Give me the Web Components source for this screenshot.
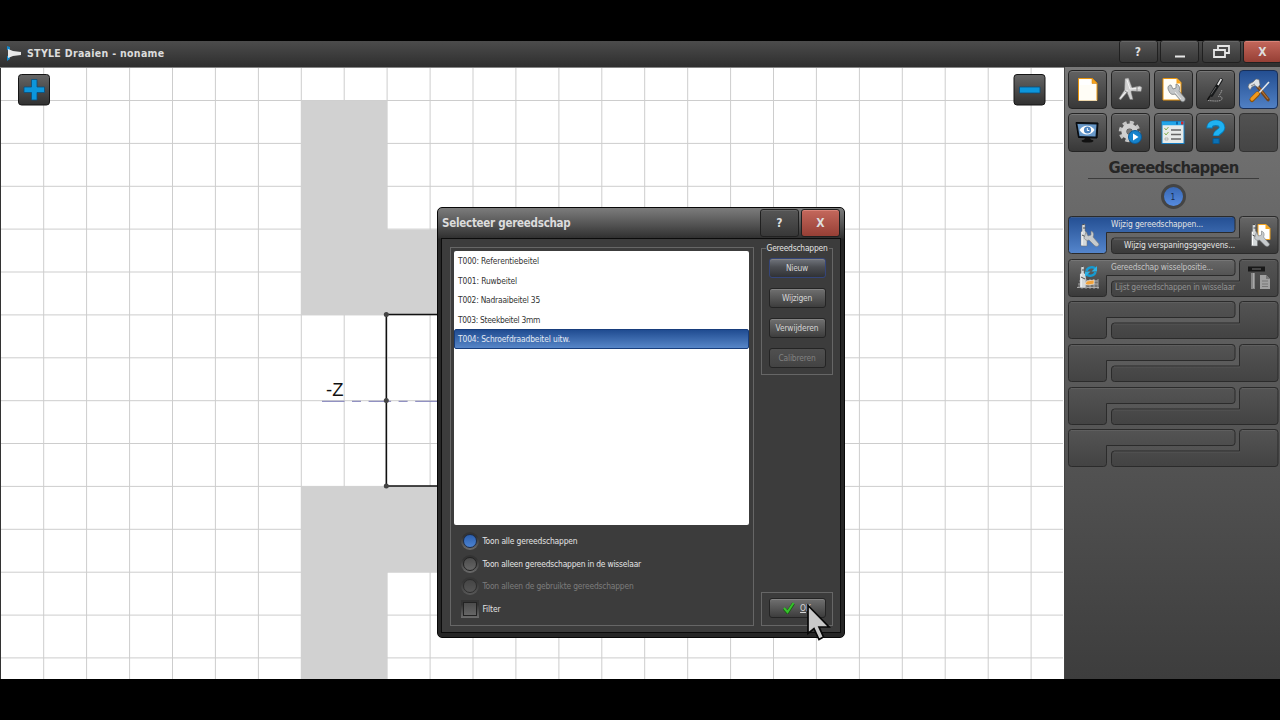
<!DOCTYPE html>
<html lang="nl">
<head>
<meta charset="utf-8">
<title>STYLE Draaien - noname</title>
<style>
    html, body {
        margin: 0;
        height: 100%;
        background: #000;
        overflow: hidden;
    }

    body {
        --ui-font: "DejaVu Sans Condensed", "DejaVu Sans", "Noto Sans", sans-serif;
        font-family: var(--ui-font);
        font-stretch: condensed;
        font-size: 8.4px;
        color: #e4e4e4;
    }
</style>
</head>
<body>
<style-app></style-app>

<script>
// Icons of the tool palette, all on a 39x39 grid
const WRENCH = '<path d="M16 18c-2-3-1-6 2-6l2 4 3-1 0-4c4 1 4 5 3 7l6 7c1 3-2 5-4 3l-6-7c-3 1-5 0-6-3z" fill="#c3c6c8" stroke="#6f7375" stroke-width=".7"/><path d="M22 19l6 7" stroke="#eee"/>';
const TURNTOOL = '<path d="M13 30V16l1-1V9l3-1v7l2 2v13z" fill="#d5d9da" stroke="#6c6f70" stroke-width=".5"/><path d="M14 16v13" stroke="#fff"/><path d="M14.500 8.500h2M15 12h2.500M14 19l4 2" stroke="#4d4f50" fill="none"/>';
const TOOLWRENCH = '<path d="M18 16l2 4 3-1 0-4c3 1 3 4 2 6l6 7c0 2-2 3-4 2l-6-6c-2 1-4 0-5-2z" fill="#c7cbcd" stroke="#777b7d" stroke-width=".6"/>';

const ICONS = {
    doc: '<path d="M10.500 8.500h14l4.500 4.500v17.500h-18.500z" fill="#fffdf6" stroke="#e8940c"/><path d="M24 8v5.500h5z" fill="#f7a51d" stroke="#c87906" stroke-width=".5"/><path d="M11 30.500h18" stroke="#efd9ad"/><path d="M12 10h10v5h-10z" fill="#fff"/>',
    chuck: '<path d="M14 8.500l3.500-.5 3.500 9.500 8-1.500 2 1.500-1 4-9-.5-1 .5 2 8h-3l-3-7-6.500 7.500-1.500-1.500 5.500-8.500z" fill="#d0d0d0" stroke="#777" stroke-width=".5"/><path d="M16 10l3 9 10-1M9.500 28l7-8" stroke="#f2f2f2" fill="none"/><path d="M26 17v4M14 21l3 2" stroke="#888" fill="none"/>',
    docWrench: '<path d="M9 8.500h14l4 4v17.500h-18z" fill="#fffdf6" stroke="#e8940c"/><path d="M22.500 8v5.500h5z" fill="#f7a51d"/><g transform="translate(-1 3)">' + WRENCH + '</g>',
    pen: '<path d="M25 10L15.500 25" stroke="#17191a" stroke-width="3.600" stroke-linecap="round"/><path d="M25.300 9l-3.500 6" stroke="#e0e0e0" stroke-width="1.700"/><path d="M20 17l-5 7.500" stroke="#777" stroke-width=".8"/><path d="M14 26l-2.500 4" stroke="#111" stroke-width="1.500"/><path d="M12 30.500c6 .5 14 1.500 14-2s-5-.5-3-3 2.500-4 3-6" stroke="#a6a6a6" fill="none" stroke-width=".9" stroke-dasharray="1.500 .6"/>',
    tools: '<path d="M19 17l10 12.500" stroke="#70441c" stroke-width="3.600" stroke-linecap="round"/><path d="M19 16.500l10 12.500" stroke="#b97537" stroke-width="1.200"/><path d="M9 17l1-3 4-2 3-3 3 .5 1 5-2 3-3-2-3 1.500-2 3z" fill="#dfe3e5" stroke="#666" stroke-width=".6"/><path d="M12 16l4-2" stroke="#888"/><path d="M30 12L20 23" stroke="#e4e7ea" stroke-width="1.600"/><path d="M18.500 24l-5.500 5.500" stroke="#8b5208" stroke-width="5" stroke-linecap="round"/><path d="M18.500 23.500l-5.500 5.500" stroke="#f2991b" stroke-width="3.400" stroke-linecap="round"/>',
    monitor: '<path d="M8 9.500l22 .5-1 15-18.500-.5z" fill="#10161d" stroke="#05080c"/><path d="M9.500 11l19 .5-1 12-16-.5z" fill="#6798c9"/><path d="M11.500 17c4-6 12-5 15 0-4 6-11 6-15 0z" fill="#fff"/><circle cx="19.500" cy="17" r="3.600" fill="#4b82bd"/><path d="M19.300 15v2.500h2" stroke="#fff" fill="none"/><path d="M17 25h5l1 2-7 0z" fill="#111"/><ellipse cx="19.500" cy="28" rx="6" ry="1.600" fill="#111"/>',
    gear: '<circle cx="18.500" cy="18.500" r="8.500" fill="none" stroke="#c4c4c4" stroke-width="4.500" stroke-dasharray="3.800 2.870"/><circle cx="18.500" cy="18.500" r="5.600" fill="none" stroke="#d0d0d0" stroke-width="5"/><circle cx="18.500" cy="18.500" r="2.600" fill="#777"/><circle cx="24" cy="24" r="6.500" fill="#1683cc" stroke="#0a5b98"/><path d="M22 20.500l5.500 3.500-5.500 3.500z" fill="#fff"/>',
    form: '<rect x="8" y="8.500" width="22" height="22" fill="#e7eae9" stroke="#1980c4"/><path d="M8 10.500h22" stroke="#22a5e8" stroke-width="3.500"/><path d="M27 8.500h2.500v3H27z" fill="#d2262b"/><path d="M22 8.500h2v3h-2z" fill="#0c66ab"/><path d="M10.500 15l1.500 2 2.500-3M10.500 20l1.500 2 2.500-3" stroke="#86ad53" fill="none"/><path d="M17 17h10M17 21.500h10M17 26h10" stroke="#666" stroke-width="1.600"/><path d="M11 25h3v2h-3z" fill="none" stroke="#999" stroke-width=".6"/>',
    help: '<path d="M13.500 15.500c0-7 12.500-7 12.500-1 0 4.500-6 4-6 8.500" fill="none" stroke="#0878b5" stroke-width="6.500"/><path d="M13.500 14.500c0-6.500 12.500-6.500 12.500 0 0 4-6 4-6 8" fill="none" stroke="#1fb2f2" stroke-width="4.800"/><path d="M17 25.500h6.200v5H17z" fill="#0b70b4" stroke="#07588f"/>',
    toolWrench: TURNTOOL + TOOLWRENCH,
    toolDoc: '<path d="M18 8.500h8l4 4v11H18z" fill="#fff" stroke="#f0a323"/><path d="M25.500 8v5h5z" fill="#f6a71f"/><g transform="translate(-1.500 0)">' + TURNTOOL + TOOLWRENCH + '</g>',
    toolSwap: '<path d="M9 29l4-8h16l1 8z" fill="#737373"/><path d="M11 22h19M10 25h20M9 28.500h22M14 20v10M18 20v10M22 20v10M26 20v10M30 20v10" stroke="#b9b9b9" stroke-width=".8"/><g transform="translate(-1 -1)">' + TURNTOOL + '</g><path d="M18.500 12c1-4 7-5 9-2M27.500 13c-1 4-7 5-9 2" stroke="#159ad1" stroke-width="2.400" fill="none"/><path d="M29 7v5.500h-5.500zM17 18v-5.500h5.500z" fill="#2eb1e5"/><path d="M17 25l2-3 7-1v4l-6 1z" fill="#f0a139" stroke="#fff" stroke-width=".5"/>',
    toolList: '<path d="M8 7.500h17v5H8z" fill="#181818"/><path d="M12 10h9" stroke="#444" stroke-width="2"/><path d="M11 14h4v16h-4z" fill="#878787"/><path d="M13.500 14v15" stroke="#a9a9a9"/><path d="M20 16h6l4 4v10H20z" fill="#a0a0a0"/><path d="M22 22h6M22 25h6M22 27.500h6" stroke="#777"/><path d="M26 16v4h4z" fill="#777"/>'
};

const icon = (name) => `<svg class="icon" width="39" height="39" viewBox="0 0 39 39">${ICONS[name] || ''}</svg>`;

/**
 * One line of text, tracked so that it fills the given width
 */
class FitText extends HTMLElement {
    constructor() {
        super();
        this.attachShadow({ mode: 'open' });
    }

    connectedCallback() {
        this.shadowRoot.innerHTML = `
            <style>
                :host { display: inline-block; white-space: pre; line-height: 1.2; text-align: left; }
            </style>
            <span><slot></slot></span>
        `.replace(/>\s+</g, '><').trim();

        const span = this.shadowRoot.querySelector('span');
        const width = parseFloat(this.getAttribute('width'));
        const natural = span.getBoundingClientRect().width;
        span.style.letterSpacing = (width - natural) / this.textContent.length + 'px';
        this.style.width = width + 'px';
    }
}

/**
 * Caption buttons of a window: help, minimise, restore, close
 */
class CaptionButton extends HTMLElement {
    constructor() {
        super();
        this.attachShadow({ mode: 'open' });
    }

    connectedCallback() {
        this.shadowRoot.innerHTML = `
            <style>
                :host {
                    display: flex;
                    align-items: center;
                    justify-content: center;
                    box-sizing: border-box;
                    width: 39px;
                    border: 1px solid #202020;
                    border-radius: 3px;
                    background: linear-gradient(#565656, #383838);
                    box-shadow: inset 0 1px #666;
                    color: #dedede;
                    font-weight: bold;
                    font-size: 12px;
                }

                :host([close]) {
                    background: linear-gradient(#c4685c, #963f35);
                    box-shadow: inset 0 1px #d98378;
                }
            </style>
            <slot></slot>
        `;
    }
}

class ToolButton extends HTMLElement {
    constructor() {
        super();
        this.attachShadow({ mode: 'open' });
    }

    connectedCallback() {
        this.shadowRoot.innerHTML = `
            <style>
                :host {
                    display: block;
                    box-sizing: border-box;
                    width: 39px;
                    height: 39px;
                    border: 1px solid #252525;
                    border-radius: 4px;
                    background: linear-gradient(#626262, #383838);
                    box-shadow: inset 0 1px #777;
                }

                :host([active]) {
                    background: linear-gradient(#234e91, #5080c4);
                    border-color: #182f58;
                    box-shadow: none;
                }

                :host([blank]) {
                    background: linear-gradient(#525252, #454545);
                    border-color: #333;
                    box-shadow: none;
                }

                .icon { display: block; margin: -1px; }
            </style>
            ${icon(this.getAttribute('icon'))}
        `;
    }
}

/**
 * Two interlocking L-shaped buttons, one row of the side menu
 */
class MenuPair extends HTMLElement {
    constructor() {
        super();
        this.attachShadow({ mode: 'open' });
    }

    fill(state) {
        return { active: 'url(#blue)', on: 'url(#raised)' }[state] || 'url(#flat)';
    }

    connectedCallback() {
        const left = this.getAttribute('left');
        const right = this.getAttribute('right');
        this.shadowRoot.innerHTML = `
            <style>
                :host { display: grid; width: 211px; height: 38.700px; }
                .shape, .content { grid-area: 1 / 1; }
                .shape path { stroke: #2b2b2b; }
                .shape .lit { fill: none; stroke: #808080; opacity: .25; }
                .shape .lit.strong { opacity: .6; }
                .content { display: grid; grid-template-columns: 39px 1fr 39px; height: 38px; }
                .icon { display: block; }
                .labels { display: flex; flex-direction: column; min-width: 0; }
                .top { height: 16px; padding: 3px 0 0 4px; }
                .bottom { height: 16px; padding-top: 4.500px; text-align: right; margin-right: 5px; }
            </style>
            <svg class="shape" width="211" height="38" viewBox="0 0 211 38">
                <defs>
                    <linearGradient id="blue" x2="0" y2="1"><stop stop-color="#234e92"/><stop offset="1" stop-color="#5586cd"/></linearGradient>
                    <linearGradient id="raised" x2="0" y2="1"><stop stop-color="#686868"/><stop offset="1" stop-color="#393939"/></linearGradient>
                    <linearGradient id="flat" x2="0" y2="1"><stop stop-color="#545454"/><stop offset="1" stop-color="#434343"/></linearGradient>
                </defs>
                <path fill="${this.fill(left)}" d="M3.500.5H164q3 0 3 3V13.500q0 3-3 3H38.500V34.500q0 3-3 3H3.500q-3 0-3-3V3.500q0-3 3-3Z"/>
                <path fill="${this.fill(right)}" d="M174.500.5H207q3 0 3 3V34.500q0 3-3 3H46.500q-3 0-3-3V25q0-3 3-3H171.500V3.500q0-3 3-3Z"/>
                <path class="lit ${left === 'on' ? 'strong' : ''}" d="M3 1.500H164"/>
                <path class="lit ${right === 'on' ? 'strong' : ''}" d="M174 1.500H207M46 23H172"/>
            </svg>
            <div class="content">
                ${icon(this.getAttribute('left-icon'))}
                <div class="labels">
                    <div class="top"><slot name="top"></slot></div>
                    <div class="bottom"><slot name="bottom"></slot></div>
                </div>
                ${icon(this.getAttribute('right-icon'))}
            </div>
        `;
    }
}

class PushButton extends HTMLElement {
    constructor() {
        super();
        this.attachShadow({ mode: 'open' });
    }

    connectedCallback() {
        this.shadowRoot.innerHTML = `
            <style>
                :host {
                    display: flex;
                    align-items: center;
                    justify-content: center;
                    box-sizing: border-box;
                    width: 57px;
                    height: 20px;
                    border: 1px solid #242424;
                    border-radius: 3px;
                    background: linear-gradient(#707070, #595959 45%, #3d3d3d);
                    box-shadow: inset 0 1px #828282;
                    color: #d6d6d6;
                }

                :host([focused]) {
                    border-color: #34457a;
                    background: linear-gradient(#70747c, #4b4d52 45%, #303236);
                }

                :host([disabled]) {
                    background: linear-gradient(#505050, #434343);
                    box-shadow: none;
                    color: #828282;
                }
            </style>
            <slot></slot>
        `;
    }
}

class OptionRow extends HTMLElement {
    constructor() {
        super();
        this.attachShadow({ mode: 'open' });
    }

    connectedCallback() {
        this.shadowRoot.innerHTML = `
            <style>
                :host { display: flex; align-items: center; height: 22.500px; gap: 4px; }
                :host([disabled]) { color: #7d7d7d; }
                .mark {
                    box-sizing: border-box;
                    width: 18px;
                    height: 18px;
                    padding: 2px;
                    border-radius: 50%;
                    background: linear-gradient(#333, #333 25%, #6c6c6c);
                }
                .mark::before {
                    content: "";
                    display: block;
                    box-sizing: border-box;
                    height: 14px;
                    border: 1px solid #222;
                    border-radius: 50%;
                    background: linear-gradient(#4c4c4c, #666);
                }
                :host([checked]) .mark::before { background: linear-gradient(#2c5fae, #4c83d2); border-color: #1c2c48; }
                :host([square]) .mark, :host([square]) .mark::before { border-radius: 0; }
                :host([disabled]) .mark { opacity: .6; }
            </style>
            <span class="mark"></span>
            <slot></slot>
        `;
    }
}

/**
 * Drawing area: grid, chuck jaws and the outline of the workpiece
 */
class LatheCanvas extends HTMLElement {
    constructor() {
        super();
        this.attachShadow({ mode: 'open' });
    }

    connectedCallback() {
        let grid = '';
        for (let i = 0; i < 24; i++) {
            grid += `M${(43.700 + i * 42.930).toFixed(1)} 68V679`;
        }
        for (let i = 0; i < 14; i++) {
            grid += `M1 ${(100.500 + i * 42.880).toFixed(1)}H1063`;
        }
        const button = (x, sign) => `
            <rect x="${x}" y="74.500" width="31" height="30.500" rx="3" fill="url(#btn)" stroke="#151515"/>
            <path d="${sign}" fill="#0c96dc" stroke="#0a4f7c" stroke-width=".8"/>`;

        this.shadowRoot.innerHTML = `
            <style>
                :host { display: block; flex: none; width: 1064px; height: 611px; }
                svg { display: block; }
                text { font: 18.500px "Liberation Sans", Arial, sans-serif; fill: #111; }
            </style>
            <svg width="1064" height="611" viewBox="0 68 1064 611">
                <defs>
                    <linearGradient id="btn" x2="0" y2="1"><stop stop-color="#666"/><stop offset="1" stop-color="#303030"/></linearGradient>
                </defs>
                <rect y="68" width="1064" height="611" fill="#fff"/>
                <path d="${grid}" stroke="#cdcdcd"/>
                <path d="M301 100.500H387V229.500H520V315H301ZM301 486.500H520V572H387V679H301Z" fill="#d1d1d1"/>
                <path d="M322 401.300H480" stroke="#7878b6" stroke-dasharray="22.500 7.500 9 7.600"/>
                <path d="M520 314.500H386.300V486H520" fill="none" stroke="#111" stroke-width="1.500"/>
                <g fill="#444"><circle cx="386.300" cy="314.500" r="2.500"/><circle cx="386.300" cy="400.600" r="2.500"/><circle cx="386.300" cy="486" r="2.500"/></g>
                <text x="326" y="396">-Z</text>
                <path d="M.5 68V679" stroke="#333"/>
                ${button(18.500, 'M31.500 79.500h5.500v7.500h7.500v5.500h-7.500v7.500h-5.500v-7.500h-7.500v-5.500h7.500z')}
                ${button(1014, 'M1019.500 87h20.500v6h-20.500z')}
            </svg>
        `;
    }
}

class SideMenu extends HTMLElement {
    constructor() {
        super();
        this.attachShadow({ mode: 'open' });
    }

    connectedCallback() {
        this.shadowRoot.innerHTML = `
            <style>
                :host {
                    display: block;
                    box-sizing: border-box;
                    width: 216px;
                    height: 612px;
                    padding: 3px 0 0 4px;
                    background: linear-gradient(#777, #686868 25%, #555 60%, #3d3d3d);
                    border-left: 1px solid #444;
                    margin-top: -1px;
                }
                .palette { display: grid; grid-template-columns: repeat(5, 39px); gap: 4px 3.800px; margin-left: -1px; }
                h1 {
                    margin: 6px 21px 0 19px;
                    padding-bottom: 0;
                    height: 20px;
                    border-bottom: 1px solid #3c3c3c;
                    font-size: 16.500px;
                    line-height: 19px;
                    text-align: center;
                    white-space: nowrap;
                    color: #262626;
                }
                .page {
                    display: flex;
                    align-items: center;
                    justify-content: center;
                    box-sizing: border-box;
                    width: 25px;
                    height: 25px;
                    margin: 5px 0 7px 91.500px;
                    border: 3px solid #444;
                    border-radius: 50%;
                    background: linear-gradient(#3868b4, #568be0);
                    color: #182b4d;
                }
                .pairs { display: flex; flex-direction: column; gap: 4px; margin-left: -1px; }
                .soft { color: #c4c4c4; }
                .dim { color: #929292; }
            </style>
            <div class="palette">
                <tool-button icon="doc"></tool-button>
                <tool-button icon="chuck"></tool-button>
                <tool-button icon="docWrench"></tool-button>
                <tool-button icon="pen"></tool-button>
                <tool-button icon="tools" active></tool-button>
                <tool-button icon="monitor"></tool-button>
                <tool-button icon="gear"></tool-button>
                <tool-button icon="form"></tool-button>
                <tool-button icon="help"></tool-button>
                <tool-button blank></tool-button>
            </div>
            <h1><fit-text width="130">Gereedschappen</fit-text></h1>
            <div class="page">1</div>
            <div class="pairs">
                <menu-pair left="active" right="on" left-icon="toolWrench" right-icon="toolDoc">
                    <fit-text slot="top" width="92">Wijzig gereedschappen...</fit-text>
                    <fit-text slot="bottom" width="111">Wijzig verspaningsgegevens...</fit-text>
                </menu-pair>
                <menu-pair left="on" left-icon="toolSwap" right-icon="toolList">
                    <fit-text slot="top" width="102" class="soft">Gereedschap wisselpositie...</fit-text>
                    <fit-text slot="bottom" width="120" class="dim">Lijst gereedschappen in wisselaar</fit-text>
                </menu-pair>
                <menu-pair></menu-pair>
                <menu-pair></menu-pair>
                <menu-pair></menu-pair>
                <menu-pair></menu-pair>
            </div>
        `;
    }
}

class ToolDialog extends HTMLElement {
    constructor() {
        super();
        this.attachShadow({ mode: 'open' });
    }

    connectedCallback() {
        this.shadowRoot.innerHTML = `
            <style>
                :host {
                    display: flex;
                    flex-direction: column;
                    box-sizing: border-box;
                    width: 408px;
                    height: 431px;
                    padding: 0 3px 4px;
                    border: 1px solid #080808;
                    border-radius: 5px;
                    background: linear-gradient(#7c7c7c, #5a5a5a 14px, #303030 30px, #262626 31px);
                }
                header { display: flex; align-items: flex-start; height: 30px; padding: 0 1px; }
                header fit-text { font-size: 11.500px; font-weight: bold; color: #dcdcdc; margin-top: 9px; }
                caption-button { height: 28px; margin-top: 1px; }
                .help { margin-left: auto; margin-right: 2px; }
                .body {
                    flex: 1;
                    display: flex;
                    justify-content: space-between;
                    box-sizing: border-box;
                    padding: 8px 7px 6px 8px;
                    border: 1px solid #0c0c0c;
                    background: #3c3c3c;
                }
                .group { box-sizing: border-box; border: 1px solid #666; }
                .tools { width: 304px; padding: 3px 4px 3px 3px; }
                ul {
                    box-sizing: border-box;
                    height: 274px;
                    margin: 0;
                    padding: 0;
                    list-style: none;
                    background: #fff;
                    border-radius: 2px;
                    color: #333;
                }
                li { box-sizing: border-box; height: 19.500px; padding: 5px 0 0 4px; line-height: 10px; }
                li.selected {
                    border: 1px solid #173d7c;
                    border-radius: 2px;
                    padding: 4px 0 0 3px;
                    background: linear-gradient(#204c91, #5786c8);
                    color: #e4ebf5;
                }
                .options { padding: 5px 0 0 6.500px; }
                .side { display: flex; flex-direction: column; justify-content: space-between; width: 72px; }
                .actions { display: flex; flex-direction: column; align-items: center; gap: 10px; height: 127px; margin-top: 1px; }
                .actions .legend { height: 8px; margin: -5px 0 -9px; padding: 0 1px; background: #3c3c3c; display: flex; align-items: center; }
                .actions push-button:first-of-type { margin-top: 5px; }
                .confirm { height: 34px; padding: 5px 6.500px; }
                .confirm svg { margin-right: 5px; }
            </style>
            <header>
                <fit-text width="128.5">Selecteer gereedschap</fit-text>
                <caption-button class="help">?</caption-button>
                <caption-button close>X</caption-button>
            </header>
            <div class="body">
                <section class="group tools">
                    <ul>
                        <li><fit-text width="81">T000: Referentiebeitel</fit-text></li>
                        <li><fit-text width="59">T001: Ruwbeitel</fit-text></li>
                        <li><fit-text width="82">T002: Nadraaibeitel 35</fit-text></li>
                        <li><fit-text width="82">T003: Steekbeitel 3mm</fit-text></li>
                        <li class="selected"><fit-text width="112">T004: Schroefdraadbeitel uitw.</fit-text></li>
                    </ul>
                    <div class="options">
                        <option-row checked><fit-text width="95">Toon alle gereedschappen</fit-text></option-row>
                        <option-row><fit-text width="158.500">Toon alleen gereedschappen in de wisselaar</fit-text></option-row>
                        <option-row disabled><fit-text width="151">Toon alleen de gebruikte gereedschappen</fit-text></option-row>
                        <option-row square><fit-text width="18">Filter</fit-text></option-row>
                    </div>
                </section>
                <div class="side">
                    <section class="group actions">
                        <div class="legend"><fit-text width="61">Gereedschappen</fit-text></div>
                        <push-button focused><fit-text width="22">Nieuw</fit-text></push-button>
                        <push-button><fit-text width="30">Wijzigen</fit-text></push-button>
                        <push-button><fit-text width="43">Verwijderen</fit-text></push-button>
                        <push-button disabled><fit-text width="37">Calibreren</fit-text></push-button>
                    </section>
                    <section class="group confirm">
                        <push-button>
                            <svg width="12" height="12" viewBox="0 0 12 12"><path d="M1 6.500l3.500 4L10.500 1.500" fill="none" stroke="#1c5c16" stroke-width="3.200"/><path d="M1 6l3.500 4L10.500 1" fill="none" stroke="#35c22b" stroke-width="2"/></svg>
                            <span><u>O</u>K</span>
                        </push-button>
                    </section>
                </div>
            </div>
        `;
    }
}

class StyleApp extends HTMLElement {
    constructor() {
        super();
        this.attachShadow({ mode: 'open' });
    }

    connectedCallback() {
        this.shadowRoot.innerHTML = `
            <style>
                :host { display: block; position: relative; width: 1280px; height: 638px; padding-top: 41px; overflow: hidden; }
                header {
                    display: flex;
                    box-sizing: border-box;
                    height: 27px;
                    padding-left: 6px;
                    background: linear-gradient(#4c4c4c, #2e2e2e);
                    border-bottom: 1px solid #858585;
                }
                header fit-text { margin: 6px auto 0 5px; font-size: 10.500px; font-weight: bold; color: #dcdcdc; }
                .logo { margin-top: 3px; }
                .caption { display: flex; gap: 2.500px; height: 23px; margin: -1px -2px 0 0; }
                main { display: flex; }
                tool-dialog { position: absolute; left: 437px; top: 207px; }
                .cursor { position: absolute; left: 804px; top: 601px; }
            </style>
            <header>
                <svg class="logo" width="16" height="18" viewBox="0 0 16 18">
                    <path d="M1 2l3 1v4L1 6zM1 12l3-1v4l-3 2z" fill="#1685c6"/>
                    <path d="M2 5l5 2 8 1v3l-8 1-5 2z" fill="#e8e8e8"/>
                </svg>
                <fit-text width="137.500">STYLE Draaien - noname</fit-text>
                <div class="caption">
                    <caption-button>?</caption-button>
                    <caption-button><svg width="12" height="14"><path d="M1 11.500h10" stroke="#e6e6e6" stroke-width="2"/></svg></caption-button>
                    <caption-button><svg width="17" height="14" viewBox="0 0 17 14"><path d="M5 4.500V1h11v7h-4M1 5h11v7H1z" fill="none" stroke="#e6e6e6" stroke-width="1.800"/></svg></caption-button>
                    <caption-button close>X</caption-button>
                </div>
            </header>
            <main>
                <lathe-canvas></lathe-canvas>
                <side-menu></side-menu>
            </main>
            <tool-dialog></tool-dialog>
            <svg class="cursor" width="30" height="42" viewBox="0 0 30 42">
                <path d="M4 4.500V32.500l6-5 5 11 4.500-2.500-4.500-10h10z" fill="#c9c9c9" stroke="#080808" stroke-width="1.700"/>
            </svg>
        `;
    }
}

customElements.define('fit-text', FitText);
customElements.define('caption-button', CaptionButton);
customElements.define('tool-button', ToolButton);
customElements.define('menu-pair', MenuPair);
customElements.define('push-button', PushButton);
customElements.define('option-row', OptionRow);
customElements.define('lathe-canvas', LatheCanvas);
customElements.define('side-menu', SideMenu);
customElements.define('tool-dialog', ToolDialog);
customElements.define('style-app', StyleApp);
</script>
</body>
</html>
